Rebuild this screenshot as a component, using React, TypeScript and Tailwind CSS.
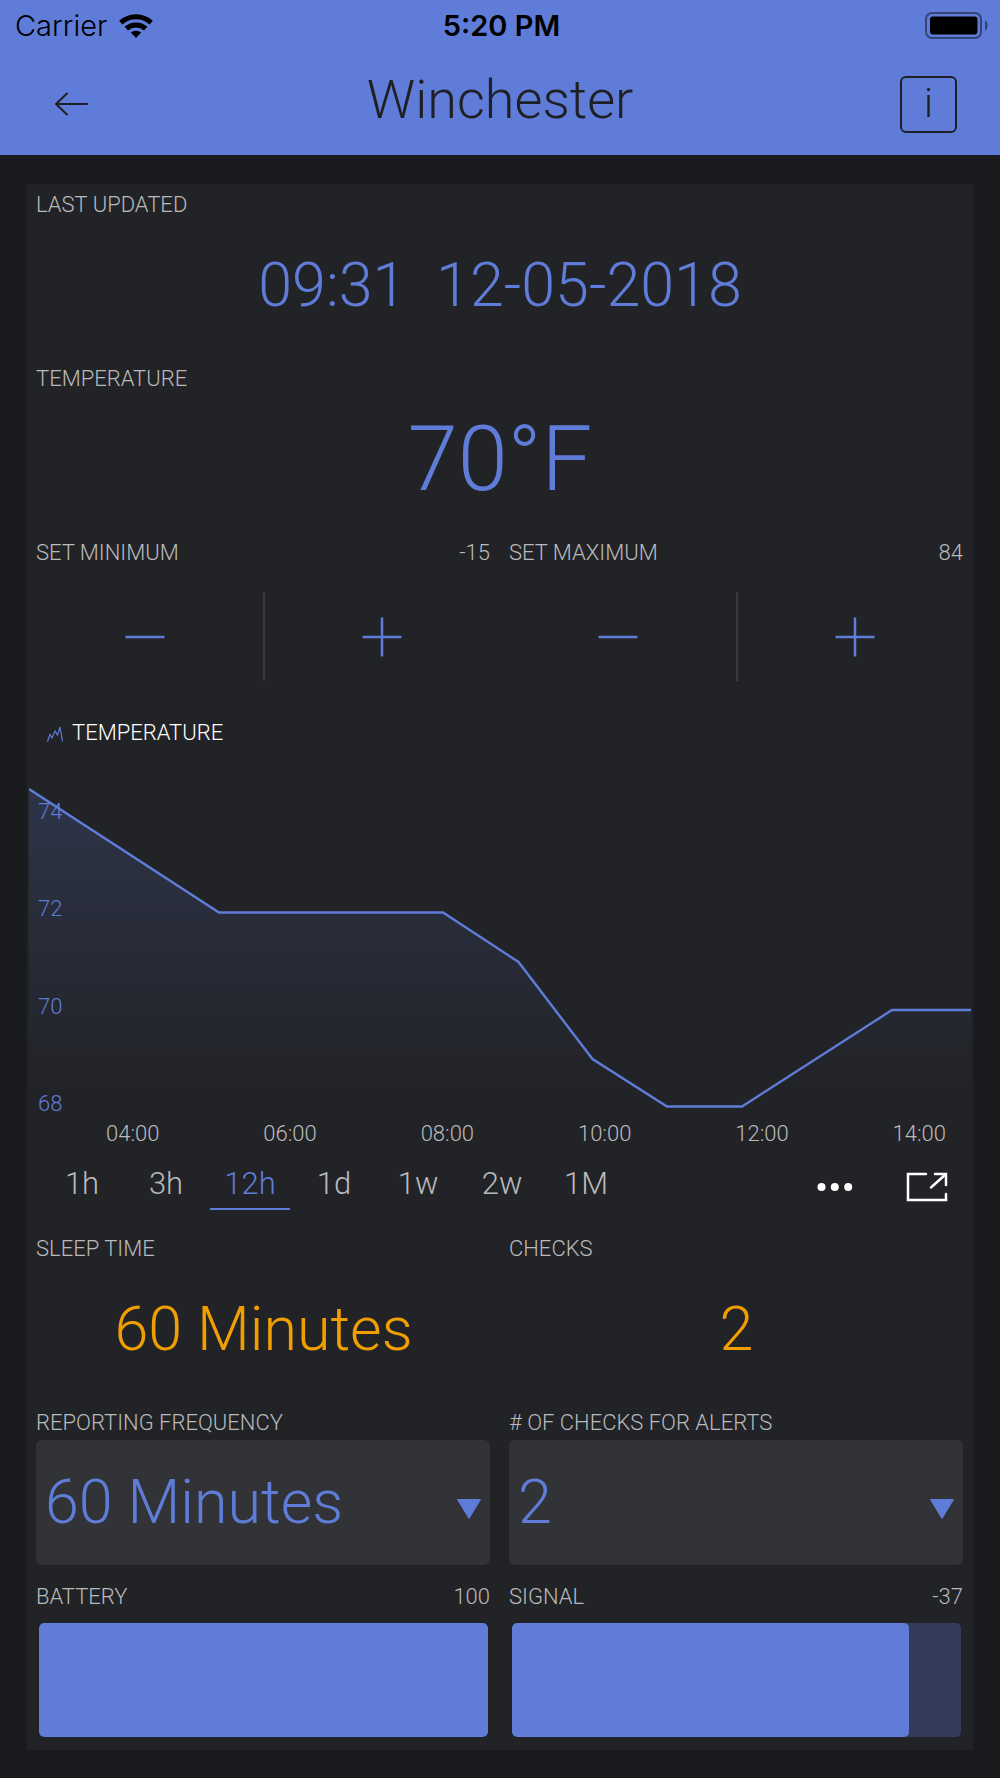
import { useState } from 'react';
import type { ReactNode } from 'react';

const ranges = ['1h', '3h', '12h', '1d', '1w', '2w', '1M'];
const hours = ['04:00', '06:00', '08:00', '10:00', '12:00', '14:00'];
const degrees = [74, 72, 70, 68];

const linePath = 'M0 9L190 132.5H414L489.5 182L563.5 279L638 326.5H713L863 230H942';

const StatusBar = () => (
  <div className="grid h-[51px] grid-cols-3 items-center pl-[15px] pr-3 font-['Inter',sans-serif] text-[29px] leading-none text-black">
    <div className="flex items-center gap-3">
      <span>Carrier</span>
      <svg className="h-6 w-[34px]" viewBox="0 0 34 24" fill="none" stroke="#000" strokeWidth="5">
        <path d="M1.8 8.6a22.5 22.5 0 0 1 30.4 0" />
        <path d="M7.3 14.6a14.5 14.5 0 0 1 19.4 0" />
        <path d="M17 24l-5.2-5.4a8 8 0 0 1 10.4 0z" fill="#000" stroke="none" />
      </svg>
    </div>
    <span className="text-center font-semibold">5:20 PM</span>
    <svg className="h-[27px] w-[63px] justify-self-end" viewBox="0 0 63 27">
      <rect x="1" y="1" width="55" height="25" rx="6" fill="none" stroke="#000" strokeOpacity="0.45" strokeWidth="2" />
      <rect x="5" y="4.500" width="47.500" height="18" rx="3" fill="#000" />
      <path d="M60 8.500c3.500 1.500 3.500 8.500 0 10z" fill="#000" fillOpacity="0.45" />
    </svg>
  </div>
);

const Header = () => (
  <header className="bg-[#5f7cd8] text-[#1f2025]">
    <StatusBar />
    <div className="grid h-[104px] grid-cols-[57px_1fr_57px] items-center px-[43px] pt-[2px]">
      <button aria-label="Back" className="flex h-[57px] items-center justify-center">
        <svg className="h-6 w-[34px]" viewBox="0 0 34 24" fill="none" stroke="currentColor" strokeWidth="2" strokeLinecap="round" strokeLinejoin="round">
          <path d="M32 12H1M12 1.500L1 12l11 10.500" />
        </svg>
      </button>
      <h1 className="pb-2 text-center text-[54px] leading-[64px]">Winchester</h1>
      <button className="flex h-[57px] items-center justify-center rounded-md border-2 border-[#1f2025] text-[40px] leading-none">
        i
      </button>
    </div>
  </header>
);

interface CellProps {
  label: string;
  reading?: string;
  htmlFor?: string;
  wide?: boolean;
  children: ReactNode;
}

const Cell = ({ label, reading, htmlFor, wide, children }: CellProps) => (
  <section className={wide ? 'col-span-2 h-[174px]' : 'h-[174px]'}>
    <div className="flex h-[38px] justify-between pl-[9px] pr-[10px] pt-[7px] text-[22px] leading-[28px] text-[#b9babc]">
      {htmlFor ? <label htmlFor={htmlFor}>{label}</label> : <h2>{label}</h2>}
      {reading && <span>{reading}</span>}
    </div>
    {children}
  </section>
);

const Stepper = ({ name, onStep }: { name: string; onStep: (by: number) => void }) => (
  <div className="flex h-[133px] items-center text-[#5f7cd8]">
    <button aria-label={`Decrease ${name}`} onClick={() => onStep(-1)} className="flex h-full flex-1 items-center justify-center">
      <svg className="size-10" viewBox="0 0 40 40" stroke="currentColor" strokeWidth="2.500">
        <path d="M0.500 20h39" />
      </svg>
    </button>
    <div className="h-[89px] w-[2px] bg-[#3a3b3f]" />
    <button aria-label={`Increase ${name}`} onClick={() => onStep(1)} className="flex h-full flex-1 items-center justify-center">
      <svg className="size-10" viewBox="0 0 40 40" stroke="currentColor" strokeWidth="2.500">
        <path d="M0.500 20h39M20 0.500v39" />
      </svg>
    </button>
  </div>
);

const Select = ({ id, options }: { id: string; options: string[] }) => (
  <div className="relative ml-[9px] mr-[10px]">
    <select id={id} className="h-[125px] w-full appearance-none rounded-md bg-[#323336] pl-[9px] text-[61px] text-[#5f7cd8] outline-none">
      {options.map((option) => (
        <option key={option}>{option}</option>
      ))}
    </select>
    <svg className="pointer-events-none absolute right-[9px] top-[59px] h-5 w-6" viewBox="0 0 24 20" fill="#5f7cd8" stroke="#5f7cd8" strokeLinejoin="round">
      <path d="M0.500 0.500h23L12 19.500z" />
    </svg>
  </div>
);

const Level = ({ name, percent }: { name: string; percent: number }) => (
  <div
    role="progressbar"
    aria-label={name}
    aria-valuenow={percent}
    className="mx-3 mt-[9px] h-[114px] overflow-hidden rounded-[5px] bg-[#343c5a]"
  >
    <div className="h-full rounded-[5px] bg-[#5f7cd8]" style={{ width: `${percent}%` }} />
  </div>
);

const Chart = () => {
  const [range, setRange] = useState('12h');

  return (
    <section className="col-span-2 h-[522px]">
      <div className="flex h-[74px] items-start gap-[9px] pl-5 pt-[13px]">
        <svg className="mt-[7px] h-4 w-4" viewBox="0 0 16 16" fill="none" stroke="#5f7cd8" strokeWidth="1.200">
          <path d="M0.500 15.500L3 8.500L5 12L8 5L10.500 9L13 1L15.500 15.500" />
        </svg>
        <h2 className="text-[22px] leading-[28px] text-white">TEMPERATURE</h2>
      </div>

      <div className="relative mx-[2px]">
        <svg className="block h-[330px] w-full" viewBox="0 0 942 330" preserveAspectRatio="none" fill="none">
          <defs>
            <linearGradient id="fade" gradientUnits="userSpaceOnUse" x1="0" y1="9" x2="0" y2="310">
              <stop offset="0" stopColor="#5f7cd8" stopOpacity="0.19" />
              <stop offset="1" stopColor="#5f7cd8" stopOpacity="0" />
            </linearGradient>
          </defs>
          <path d={`${linePath}V330H0z`} fill="url(#fade)" />
          <path d={linePath} stroke="#5f7cd8" strokeWidth="2.400" vectorEffect="non-scaling-stroke" />
        </svg>
        <div className="absolute left-[9px] top-[18px] flex h-[320px] flex-col justify-between text-[22px] leading-[28px] text-[#5f7cd8]">
          {degrees.map((degree) => (
            <span key={degree}>{degree}</span>
          ))}
        </div>
      </div>

      <div className="flex justify-between pl-[79px] pr-[27px] pt-[10px] text-[22px] leading-[28px] text-[#b9babc]">
        {hours.map((hour) => (
          <span key={hour}>{hour}</span>
        ))}
      </div>

      <div className="mt-3 flex justify-between pl-[15px] pr-[25px]">
        <div className="flex gap-1">
          {ranges.map((item) => (
            <button
              key={item}
              onClick={() => setRange(item)}
              className={`h-[50px] w-20 border-b-2 text-[31px] leading-[48px] ${
                item === range ? 'border-[#5f7cd8] text-[#5f7cd8]' : 'border-transparent text-[#b9babc]'
              }`}
            >
              {item}
            </button>
          ))}
        </div>
        <div className="flex items-center gap-[53px] pt-1 text-white">
          <button aria-label="More">
            <svg className="h-[30px] w-9" viewBox="0 0 36 30" fill="currentColor">
              <circle cx="4.500" cy="15" r="4" />
              <circle cx="17.800" cy="15" r="4" />
              <circle cx="31.200" cy="15" r="4" />
            </svg>
          </button>
          <button aria-label="Full screen">
            <svg className="h-[30px] w-[42px]" viewBox="0 0 42 30" fill="none" stroke="currentColor" strokeWidth="2.500" strokeLinecap="round">
              <path d="M20 2H2v26h38v-6M29 2h11v11M40 2L25 15.500" />
            </svg>
          </button>
        </div>
      </div>
    </section>
  );
};

const Value = ({ className, children }: { className: string; children: ReactNode }) => (
  <p className={`flex h-[127px] items-center justify-center whitespace-pre ${className}`}>{children}</p>
);

const App = () => {
  const [minimum, setMinimum] = useState(-15);
  const [maximum, setMaximum] = useState(84);

  return (
    <div className="min-h-screen bg-[#1a1b1f] font-['Roboto',sans-serif] font-light">
      <Header />
      <main className="mx-[27px] mt-[29px] grid grid-cols-2 bg-[#222327]">
        <Cell label="LAST UPDATED" wide>
          <Value className="text-[61px] text-[#5f7cd8]">{'09:31  12-05-2018'}</Value>
        </Cell>
        <Cell label="TEMPERATURE" wide>
          <Value className="text-[90px] text-[#5f7cd8]">70°F</Value>
        </Cell>

        <Cell label="SET MINIMUM" reading={String(minimum)}>
          <Stepper name="minimum" onStep={(by) => setMinimum(minimum + by)} />
        </Cell>
        <Cell label="SET MAXIMUM" reading={String(maximum)}>
          <Stepper name="maximum" onStep={(by) => setMaximum(maximum + by)} />
        </Cell>

        <Chart />

        <Cell label="SLEEP TIME">
          <Value className="text-[61px] text-[#f09e00]">60 Minutes</Value>
        </Cell>
        <Cell label="CHECKS">
          <Value className="text-[61px] text-[#f09e00]">2</Value>
        </Cell>

        <Cell label="REPORTING FREQUENCY" htmlFor="frequency">
          <Select id="frequency" options={['60 Minutes', '30 Minutes', '15 Minutes']} />
        </Cell>
        <Cell label="# OF CHECKS FOR ALERTS" htmlFor="checks">
          <Select id="checks" options={['2', '1', '3']} />
        </Cell>

        <Cell label="BATTERY" reading="100">
          <Level name="Battery" percent={100} />
        </Cell>
        <Cell label="SIGNAL" reading="-37">
          <Level name="Signal" percent={88.4} />
        </Cell>
      </main>
    </div>
  );
};

export default App;
